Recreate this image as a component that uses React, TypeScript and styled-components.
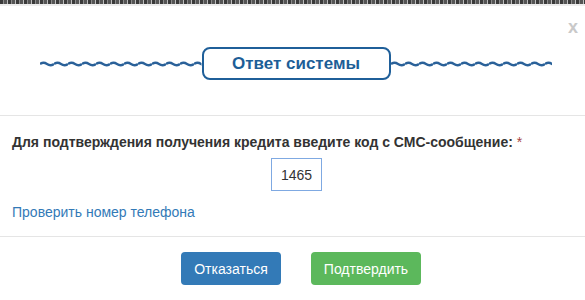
import React from "react";
import styled, { createGlobalStyle } from "styled-components";

const Global = createGlobalStyle`
  html, body { margin: 0; padding: 0; background: #fff; }
  body { font-family: "Liberation Sans", Arial, sans-serif; color: #333; }
`;

const Page = styled.div`
  width: 585px;
  height: 300px;
  overflow: hidden;
  display: flex;
  flex-direction: column;
  background: #fff;
`;

const TopStrip = styled.div`
  height: 4px;
  background: repeating-linear-gradient(90deg, #3a3a3a 0 3px, #8a8a8a 3px 4px, #555 4px 7px, #bbb 7px 8px);
  border-bottom: 2px solid #eee;
`;

const Header = styled.div`
  position: relative;
  height: 110px;
  border-bottom: 1px solid #e5e5e5;
  display: flex;
  align-items: flex-start;
  padding: 41px 33px 0 40px;
  box-sizing: border-box;
`;

const Close = styled.button`
  position: absolute;
  top: 12px;
  right: 7px;
  border: 0;
  background: none;
  padding: 0;
  font-family: "Liberation Sans", Arial, sans-serif;
  font-size: 18px;
  font-weight: bold;
  color: #c9c9c9;
  line-height: 1;
  cursor: pointer;
`;

const WaveBox = styled.div`
  flex: 1;
  height: 33px;
  display: flex;
  align-items: center;
`;

const TitleBox = styled.div`
  width: 189px;
  height: 33px;
  box-sizing: border-box;
  border: 2px solid #1f5f99;
  border-radius: 8px;
  display: flex;
  align-items: center;
  justify-content: center;
  font-size: 17px;
  font-weight: bold;
  color: #1d5e97;
`;

const Wave: React.FC<{ id: string }> = ({ id }) => (
  <svg width="100%" height="8" style={{ display: "block" }}>
    <defs>
      <pattern id={id} width="14" height="8" patternUnits="userSpaceOnUse">
        <path d="M0 4 Q3.5 1.6 7 4 T14 4" fill="none" stroke="#2a6199" strokeWidth="2.4" />
      </pattern>
    </defs>
    <rect width="100%" height="8" fill={`url(#${id})`} />
  </svg>
);

const Body = styled.div`
  height: 121px;
  box-sizing: border-box;
  border-bottom: 1px solid #e5e5e5;
  padding: 17px 12px 0 12px;
  display: flex;
  flex-direction: column;
`;

const Label = styled.label`
  font-size: 14px;
  font-weight: bold;
  line-height: 18px;
  color: #333;
`;

const Req = styled.span`
  color: #a94442;
  font-weight: normal;
  margin-left: 4px;
`;

const InputRow = styled.div`
  display: flex;
  justify-content: center;
  padding-left: 8px;
  margin-top: 7px;
`;

const CodeInput = styled.input`
  width: 51px;
  height: 33px;
  box-sizing: border-box;
  border: 1px solid #7fa9e2;
  border-radius: 0;
  text-align: center;
  font-family: "Liberation Sans", Arial, sans-serif;
  font-size: 14px;
  color: #333;
  outline: none;
  padding: 0;
`;

const Link = styled.a`
  margin-top: 12px;
  font-size: 14px;
  line-height: 18px;
  color: #337ab7;
  text-decoration: none;
`;

const Footer = styled.div`
  flex: 1;
  display: flex;
  justify-content: center;
  align-items: flex-start;
  gap: 30px;
  padding: 15px 0 0 17px;
`;

const Btn = styled.button<{ $variant: "primary" | "success"; $w: number }>`
  width: ${(p) => p.$w}px;
  height: 33px;
  border: 0;
  border-radius: 4px;
  background: ${(p) => (p.$variant === "primary" ? "#337ab7" : "#5cb85c")};
  color: #fff;
  font-family: "Liberation Sans", Arial, sans-serif;
  font-size: 14px;
  padding: 0;
  cursor: pointer;
`;

export default function App() {
  return (
    <Page>
      <Global />
      <TopStrip />
      <Header>
        <WaveBox>
          <Wave id="wl" />
        </WaveBox>
        <TitleBox>Ответ системы</TitleBox>
        <WaveBox>
          <Wave id="wr" />
        </WaveBox>
        <Close>x</Close>
      </Header>
      <Body>
        <Label>
          Для подтверждения получения кредита введите код с СМС-сообщение:<Req>*</Req>
        </Label>
        <InputRow>
          <CodeInput defaultValue="1465" />
        </InputRow>
        <Link href="#">Проверить номер телефона</Link>
      </Body>
      <Footer>
        <Btn $variant="primary" $w={100}>Отказаться</Btn>
        <Btn $variant="success" $w={110}>Подтвердить</Btn>
      </Footer>
    </Page>
  );
}
